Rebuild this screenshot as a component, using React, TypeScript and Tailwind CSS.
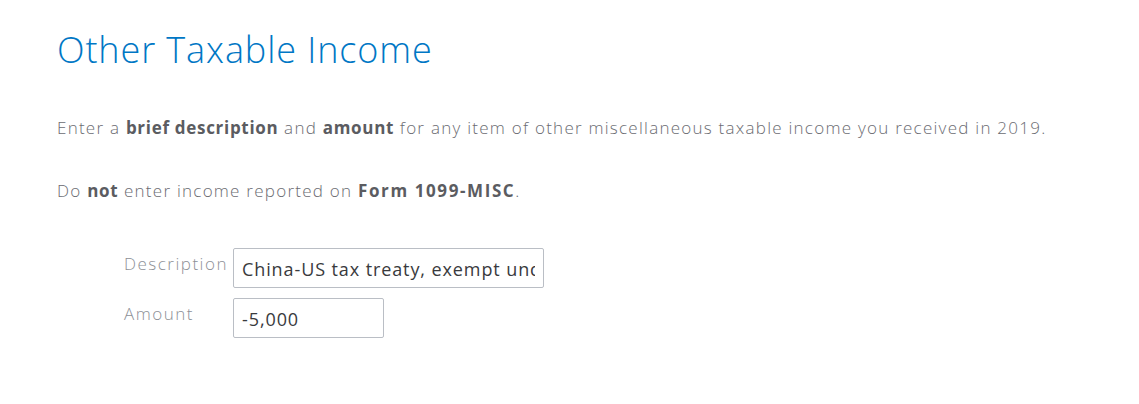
export default function App() {
  return (
    <div className="w-[1139px] h-[404px] bg-white pl-[57px] pt-[26px]" style={{ fontFamily: "'Open Sans', sans-serif" }}>
      <h1 className="text-[36px] leading-[48px] tracking-[0.9px] text-[#0077c5] font-light">Other Taxable Income</h1>
      <p className="mt-[42px] text-[17px] leading-[24px] tracking-[1.25px] text-[#6b6c72] font-light">
        Enter a <b className="font-bold tracking-[0.7px] text-[#5b5c61]">brief description</b> and <b className="font-bold tracking-[0.7px] text-[#5b5c61]">amount</b> for any item of other miscellaneous taxable income you received in 2019.
      </p>
      <p className="mt-[39px] text-[17px] leading-[24px] tracking-[1.25px] text-[#6b6c72] font-light">
        Do <b className="font-bold tracking-[0.7px] text-[#5b5c61]">not</b> enter income reported on <b className="font-bold tracking-[1.6px] text-[#5b5c61]">Form 1099-MISC</b>.
      </p>
      <div className="mt-[45px] ml-[67px] flex flex-col gap-[10px]">
        <div className="flex items-start">
          <label className="w-[109px] pt-[4px] text-[17px] leading-[24px] tracking-[1.5px] text-[#8d9096] font-light">Description</label>
          <input readOnly value="China-US tax treaty, exempt under Article 20" className="w-[311px] h-[40px] border border-[#babec5] rounded-[2px] px-[8px] pt-[2px] text-[18px] tracking-[0.9px] text-[#393a3d] outline-none" style={{ fontFamily: "'Open Sans', sans-serif" }} />
        </div>
        <div className="flex items-start">
          <label className="w-[109px] pt-[4px] text-[17px] leading-[24px] tracking-[1.5px] text-[#8d9096] font-light">Amount</label>
          <input readOnly value="-5,000" className="w-[151px] h-[40px] border border-[#babec5] rounded-[2px] px-[8px] pt-[2px] text-[18px] tracking-[0.9px] text-[#393a3d] outline-none" style={{ fontFamily: "'Open Sans', sans-serif" }} />
        </div>
      </div>
    </div>
  );
}
